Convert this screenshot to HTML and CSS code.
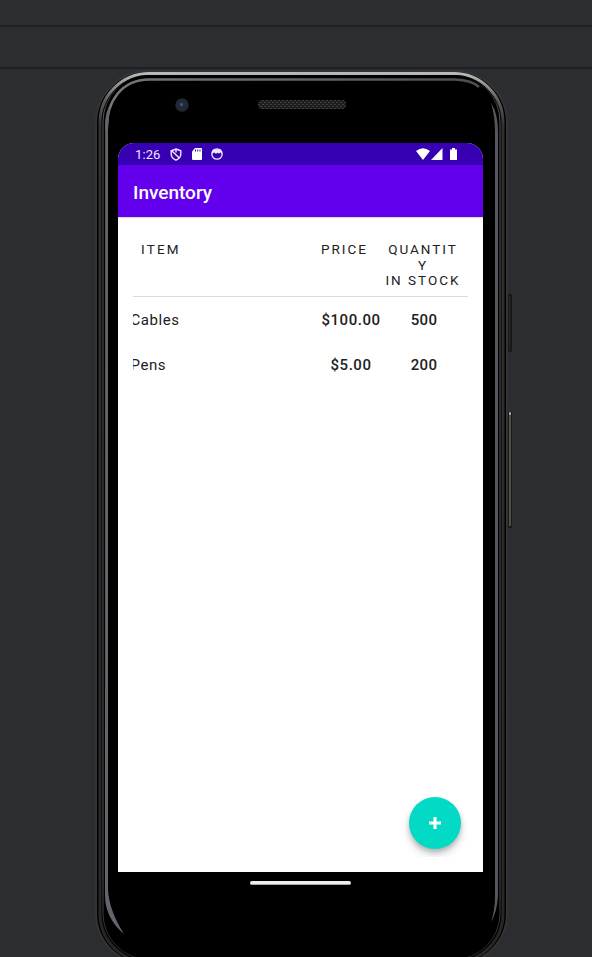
FILE: index.html
```html
<!DOCTYPE html>
<html lang="en">
<head>
<meta charset="utf-8">
<title>Inventory</title>
<link rel="stylesheet" href="styles.css">
</head>
<body>
<div class="window">
  <div class="toolbar toolbar-top"></div>
  <div class="toolbar toolbar-sub"></div>
  <main class="stage">
    <div class="phone">
      <svg class="frame" viewBox="0 0 420 890" width="420" height="890" fill="none" aria-hidden="true">
        <defs>
          <linearGradient id="rim" x1="0" y1="0" x2="0" y2="1">
            <stop offset="0" stop-color="#b8bab9"/><stop offset=".008" stop-color="#a0a2a2"/><stop offset=".03" stop-color="#5c5d5d"/><stop offset=".06" stop-color="#303030"/><stop offset="1" stop-color="#262626"/>
          </linearGradient>
          <linearGradient id="line" x1="0" y1="0" x2="0" y2="1">
            <stop offset="0" stop-color="#000"/><stop offset=".04" stop-color="#555"/><stop offset=".9" stop-color="#555"/><stop offset="1" stop-color="#222"/>
          </linearGradient>
          <linearGradient id="inner" x1="0" y1="0" x2="1" y2="0">
            <stop offset="0" stop-color="#74777c"/><stop offset=".5" stop-color="#63676c"/><stop offset="1" stop-color="#4d4c53"/>
          </linearGradient>
        </defs>
        <rect x="415" y="224" width="4" height="58" rx="1" fill="#17181a"/>
        <path d="M416.500 226v54" stroke="#29292a"/>
        <rect x="415" y="342" width="4" height="116" rx="1" fill="#191919"/>
        <path d="M417 343v113" stroke="#65615e" stroke-width="1.500"/>
        <path d="M416 343.500h2" stroke="#c5c5c5" stroke-width="2"/>
        <rect x="3" y="1" width="411" height="894" rx="52" fill="#000" stroke="#343434" stroke-width="2"/>
        <rect x="7" y="3.500" width="403" height="889" rx="49" stroke="url(#rim)" stroke-width="3"/>
        <rect x="10" y="5.500" width="397" height="884" rx="46" stroke="url(#line)"/>
        <path d="M13.500 60C13.500 30 29 10 56 9.500H362C374 10 381 12 386 17" stroke="url(#inner)" stroke-width="2.500"/>
        <path d="M12.200 50Q13 42 17 34L15 60V820Q16 840 31 864Q12 848 12 825Z" fill="#62656b"/>
        <path d="M398 33Q405 43 405 62V826Q404 842 398 852Q402 840 402 826V62Q402 46 398 33Z" fill="#57565d"/>
      </svg>
      <div class="forehead">
        <svg class="camera" viewBox="0 0 14 14" width="14" height="14"><circle cx="7" cy="7" r="6.700" fill="#24272b"/><circle cx="7" cy="7" r="3.600" fill="#202a4c"/><circle cx="6.500" cy="6.500" r="1.500" fill="#455584"/></svg>
        <svg class="speaker" viewBox="0 0 88 10" width="88" height="10"><defs><pattern id="mesh" width="4" height="4" patternUnits="userSpaceOnUse"><path d="M0 0h2v1H0zM2 2h2v1H2z" fill="#3e413f"/></pattern></defs><rect width="88" height="9" rx="4" fill="#1c1e1d"/><rect width="88" height="9" rx="4" fill="url(#mesh)"/></svg>
      </div>
      <section class="screen">
        <div class="status">
          <span class="clock">1:26</span>
          <svg class="shield" viewBox="0 0 12 13" width="12" height="13" fill="none" stroke="#eee6fb" stroke-width="1.400"><path d="M6 1 10.800 2.800V6Q10.800 10 6 12.200Q1.200 10 1.200 6V2.800ZM2 3 9 9.800M6 1.500V4.500"/></svg>
          <svg class="sd" viewBox="0 0 10 12" width="10" height="12"><path d="M3 0h6q1 0 1 1v10q0 1-1 1H1q-1 0-1-1V3.500Z" fill="#fff"/><path d="M3.500 1.500v2M5.700 1.500v2M8 1.500v2" stroke="#3700b3"/></svg>
          <svg class="face" viewBox="0 0 12 12" width="12" height="12"><circle cx="6" cy="6" r="5.200" fill="none" stroke="#eee6fb" stroke-width="1.300"/><path d="M1 6V3L3 1.200h6l2 2.300V6L9.500 4.500 8 5.500 6.500 4.800 5 5.700 3 4.500Z" fill="#eee6fb"/></svg>
          <svg class="signals" viewBox="0 0 42 12" width="42" height="12" fill="#fff"><path d="M0 3Q7-2.500 14 3L7 12ZM26.500 0v12H15ZM34 1.500h2V0h3v1.500h2V12h-7Z"/></svg>
        </div>
        <header class="appbar"><h1>Inventory</h1></header>
        <div class="content">
          <div class="row head">
            <span class="item">ITEM</span><span class="price">PRICE</span><span class="qty">QUANTIT<br>Y<br>IN STOCK</span>
          </div>
          <div class="row entry"><span class="item">Cables</span><span class="price">$100.00</span><span class="qty">500</span></div>
          <div class="row entry"><span class="item">Pens</span><span class="price">$5.00</span><span class="qty">200</span></div>
        </div>
        <div class="fab-clip"><button class="fab" aria-label="Add item"><svg viewBox="0 0 12 12" width="12" height="12"><path d="M6 0v12M0 6h12" stroke="#fff" stroke-width="3"/></svg></button></div>
      </section>
      <div class="home"></div>
    </div>
  </main>
</div>
</body>
</html>
```
FILE: styles.css
```css
* { box-sizing: border-box; }
body { margin: 0; background: #2c2d31; font-family: Roboto, sans-serif; }
.window { height: 957px; overflow: hidden; display: flex; flex-direction: column; }
.toolbar { flex: none; border-bottom: 2px solid #1f2024; }
.toolbar-top { height: 27px; }
.toolbar-sub { height: 42px; }
.stage { flex: 1; min-height: 0; padding: 1px 0 0 93px; }
.phone { position: relative; width: 420px; height: 890px; padding-left: 25px; }
.frame { position: absolute; left: 0; top: 0; }
.forehead { position: relative; height: 73px; padding: 28px 0 0 57px; display: flex; align-items: flex-start; gap: 69px; }
.speaker { margin-top: 2px; }
.screen { position: relative; width: 365px; height: 729px; background: #fff; border-radius: 16px 16px 0 0; overflow: hidden; }
.status { height: 22px; background: #3700b3; padding: 0 25px 0 17px; display: flex; align-items: center; color: #eee6fb; }
.clock { width: 35px; font-size: 13px; letter-spacing: .1px; }
.sd { margin-left: 10px; }
.face { margin-left: 9px; }
.signals { margin-left: auto; }
.appbar { height: 52px; background: #6200ee; padding: 3px 0 0 15px; display: flex; align-items: center; box-shadow: 0 1px 1px #ddd; }
.appbar h1 { margin: 0; font-size: 19px; line-height: 24px; font-weight: 500; letter-spacing: 0; color: #fff; }
.content { width: 335px; margin-left: 15px; color: #212121; }
.row { display: grid; grid-template-columns: 176px 69px 90px; }
.head { height: 80px; padding-top: 25px; border-bottom: 1px solid #dcdcdc; font-size: 13.500px; line-height: 15.500px; letter-spacing: 2px; }
.head .item { padding-left: 8px; letter-spacing: 2.200px; }
.head .price { padding-left: 12px; }
.head .qty { text-align: center; }
.entry { height: 45px; padding-top: 14px; font-size: 15px; line-height: 18px; letter-spacing: .55px; }
.entry .item { text-indent: -2.500px; overflow: hidden; }
.entry .price, .entry .qty { font-weight: 500; text-align: center; white-space: nowrap; }
.entry .price { width: 84px; }
.entry .qty { letter-spacing: .3px; padding-left: 2px; }
.fab-clip { position: absolute; right: 15px; bottom: 15px; width: 70px; height: 70px; overflow: hidden; padding: 10px 0 0 10.500px; }
.fab { width: 52px; height: 52px; border: 0; border-radius: 50%; padding: 0; background: #03dac5; display: grid; place-items: center; box-shadow: 0 3px 5px #0003, 0 6px 10px #00000024; }
.home { position: relative; width: 101px; height: 4px; margin: 9px 0 0 131.500px; border-radius: 2px; background: #eee; border-bottom: 1px solid #aaa; }
```
